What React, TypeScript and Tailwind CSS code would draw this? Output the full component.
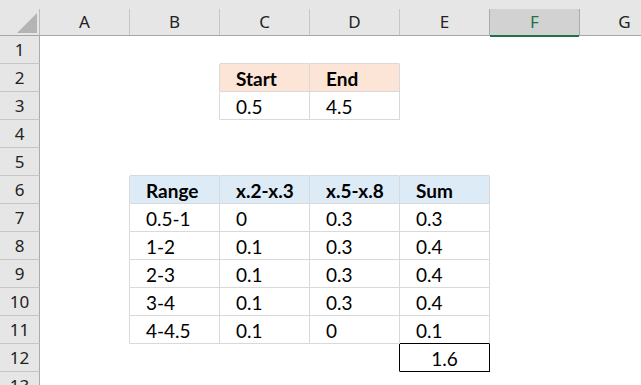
import React from 'react'

const COLS = ['A', 'B', 'C', 'D', 'E', 'F', 'G']
const ROWS = [1, 2, 3, 4, 5, 6, 7, 8, 9, 10, 11, 12, 13]

type Fill = 'orange' | 'blue' | null
type CellData = { v: string; bold?: boolean; fill?: Fill; center?: boolean }

// sheet contents keyed by "row:col"
const CELLS: { [key: string]: CellData } = {
  '2:2': { v: 'Start', bold: true, fill: 'orange' },
  '2:3': { v: 'End', bold: true, fill: 'orange' },
  '3:2': { v: '0.5' },
  '3:3': { v: '4.5' },
  '6:1': { v: 'Range', bold: true, fill: 'blue' },
  '6:2': { v: 'x.2-x.3', bold: true, fill: 'blue' },
  '6:3': { v: 'x.5-x.8', bold: true, fill: 'blue' },
  '6:4': { v: 'Sum', bold: true, fill: 'blue' },
  '7:1': { v: '0.5-1' }, '7:2': { v: '0' }, '7:3': { v: '0.3' }, '7:4': { v: '0.3' },
  '8:1': { v: '1-2' }, '8:2': { v: '0.1' }, '8:3': { v: '0.3' }, '8:4': { v: '0.4' },
  '9:1': { v: '2-3' }, '9:2': { v: '0.1' }, '9:3': { v: '0.3' }, '9:4': { v: '0.4' },
  '10:1': { v: '3-4' }, '10:2': { v: '0.1' }, '10:3': { v: '0.3' }, '10:4': { v: '0.4' },
  '11:1': { v: '4-4.5' }, '11:2': { v: '0.1' }, '11:3': { v: '0' }, '11:4': { v: '0.1' },
  '12:4': { v: '1.6', center: true },
}

const inTable = (r: number, c: number) =>
  (r >= 2 && r <= 3 && c >= 2 && c <= 3) || (r >= 6 && r <= 11 && c >= 1 && c <= 4)
const inBox = (r: number, c: number) => r === 12 && c === 4

const RIGHT = { none: 'border-r-transparent', gray: 'border-r-[#d9d9d9]', black: 'border-r-black' }
const BOTTOM = { none: 'border-b-transparent', gray: 'border-b-[#d9d9d9]', black: 'border-b-black' }
const FILLS = { orange: 'bg-[#fce4d6]', blue: 'bg-[#ddebf7]', none: 'bg-white' }

function Cell({ r, c }: { r: number; c: number }) {
  const d = CELLS[`${r}:${c}`]
  const right = inBox(r, c) || inBox(r, c + 1) ? 'black' : inTable(r, c) || inTable(r, c + 1) ? 'gray' : 'none'
  const bottom = inBox(r, c) || inBox(r + 1, c) ? 'black' : inTable(r, c) || inTable(r + 1, c) ? 'gray' : 'none'

  return (
    <div
      className={`flex w-[90px] shrink-0 items-center border-r border-b pt-[1px] text-[19px] leading-none text-black ${RIGHT[right]} ${BOTTOM[bottom]} ${FILLS[d?.fill ?? 'none']} ${d?.center ? 'justify-center' : 'pl-[16px]'} ${d?.bold ? 'font-bold' : ''}`}
    >
      {d?.v}
    </div>
  )
}

export default function App() {
  return (
    <div className="h-[385px] w-[641px] overflow-hidden bg-white font-['Lato','Liberation_Sans',sans-serif]">
      {/* Column headers */}
      <div className="flex h-[36px] border-b border-[#a6a6a6] bg-[#e6e6e6] font-['Noto_Sans',sans-serif] text-[17px] text-[#222]">
        <div className="w-[40px] shrink-0 pt-[9px]">
          <div className="flex h-full items-end justify-end border-r border-[#bdbdbd] pr-[2px] pb-[2px]">
            <svg width="20" height="20" viewBox="0 0 20 20">
              <polygon points="0,20 20,20 20,0" fill="#b4b4b4" />
            </svg>
          </div>
        </div>
        {COLS.map((col) => {
          const selected = col === 'F'
          return (
            <div
              key={col}
              className={`relative mt-[9px] flex w-[90px] shrink-0 items-center justify-center border-r ${
                selected ? 'border-[#ababab] bg-[#d2d2d2] text-[#217346]' : col === 'E' ? 'border-[#ababab]' : 'border-[#c6c6c6]'
              }`}
            >
              {col}
              {selected && <span className="absolute -bottom-[2px] left-0 right-0 h-[2px] bg-[#217346]" />}
            </div>
          )
        })}
      </div>

      {/* Rows */}
      {ROWS.map((r) => (
        <div key={r} className="flex h-[28px]">
          <div className="flex w-[40px] shrink-0 items-center justify-center border-r border-b border-r-[#ababab] border-b-[#c6c6c6] bg-[#e6e6e6] font-['Noto_Sans',sans-serif] text-[17px] text-[#222]">
            {r}
          </div>
          {COLS.map((_, c) => (
            <Cell key={c} r={r} c={c} />
          ))}
        </div>
      ))}
    </div>
  )
}
